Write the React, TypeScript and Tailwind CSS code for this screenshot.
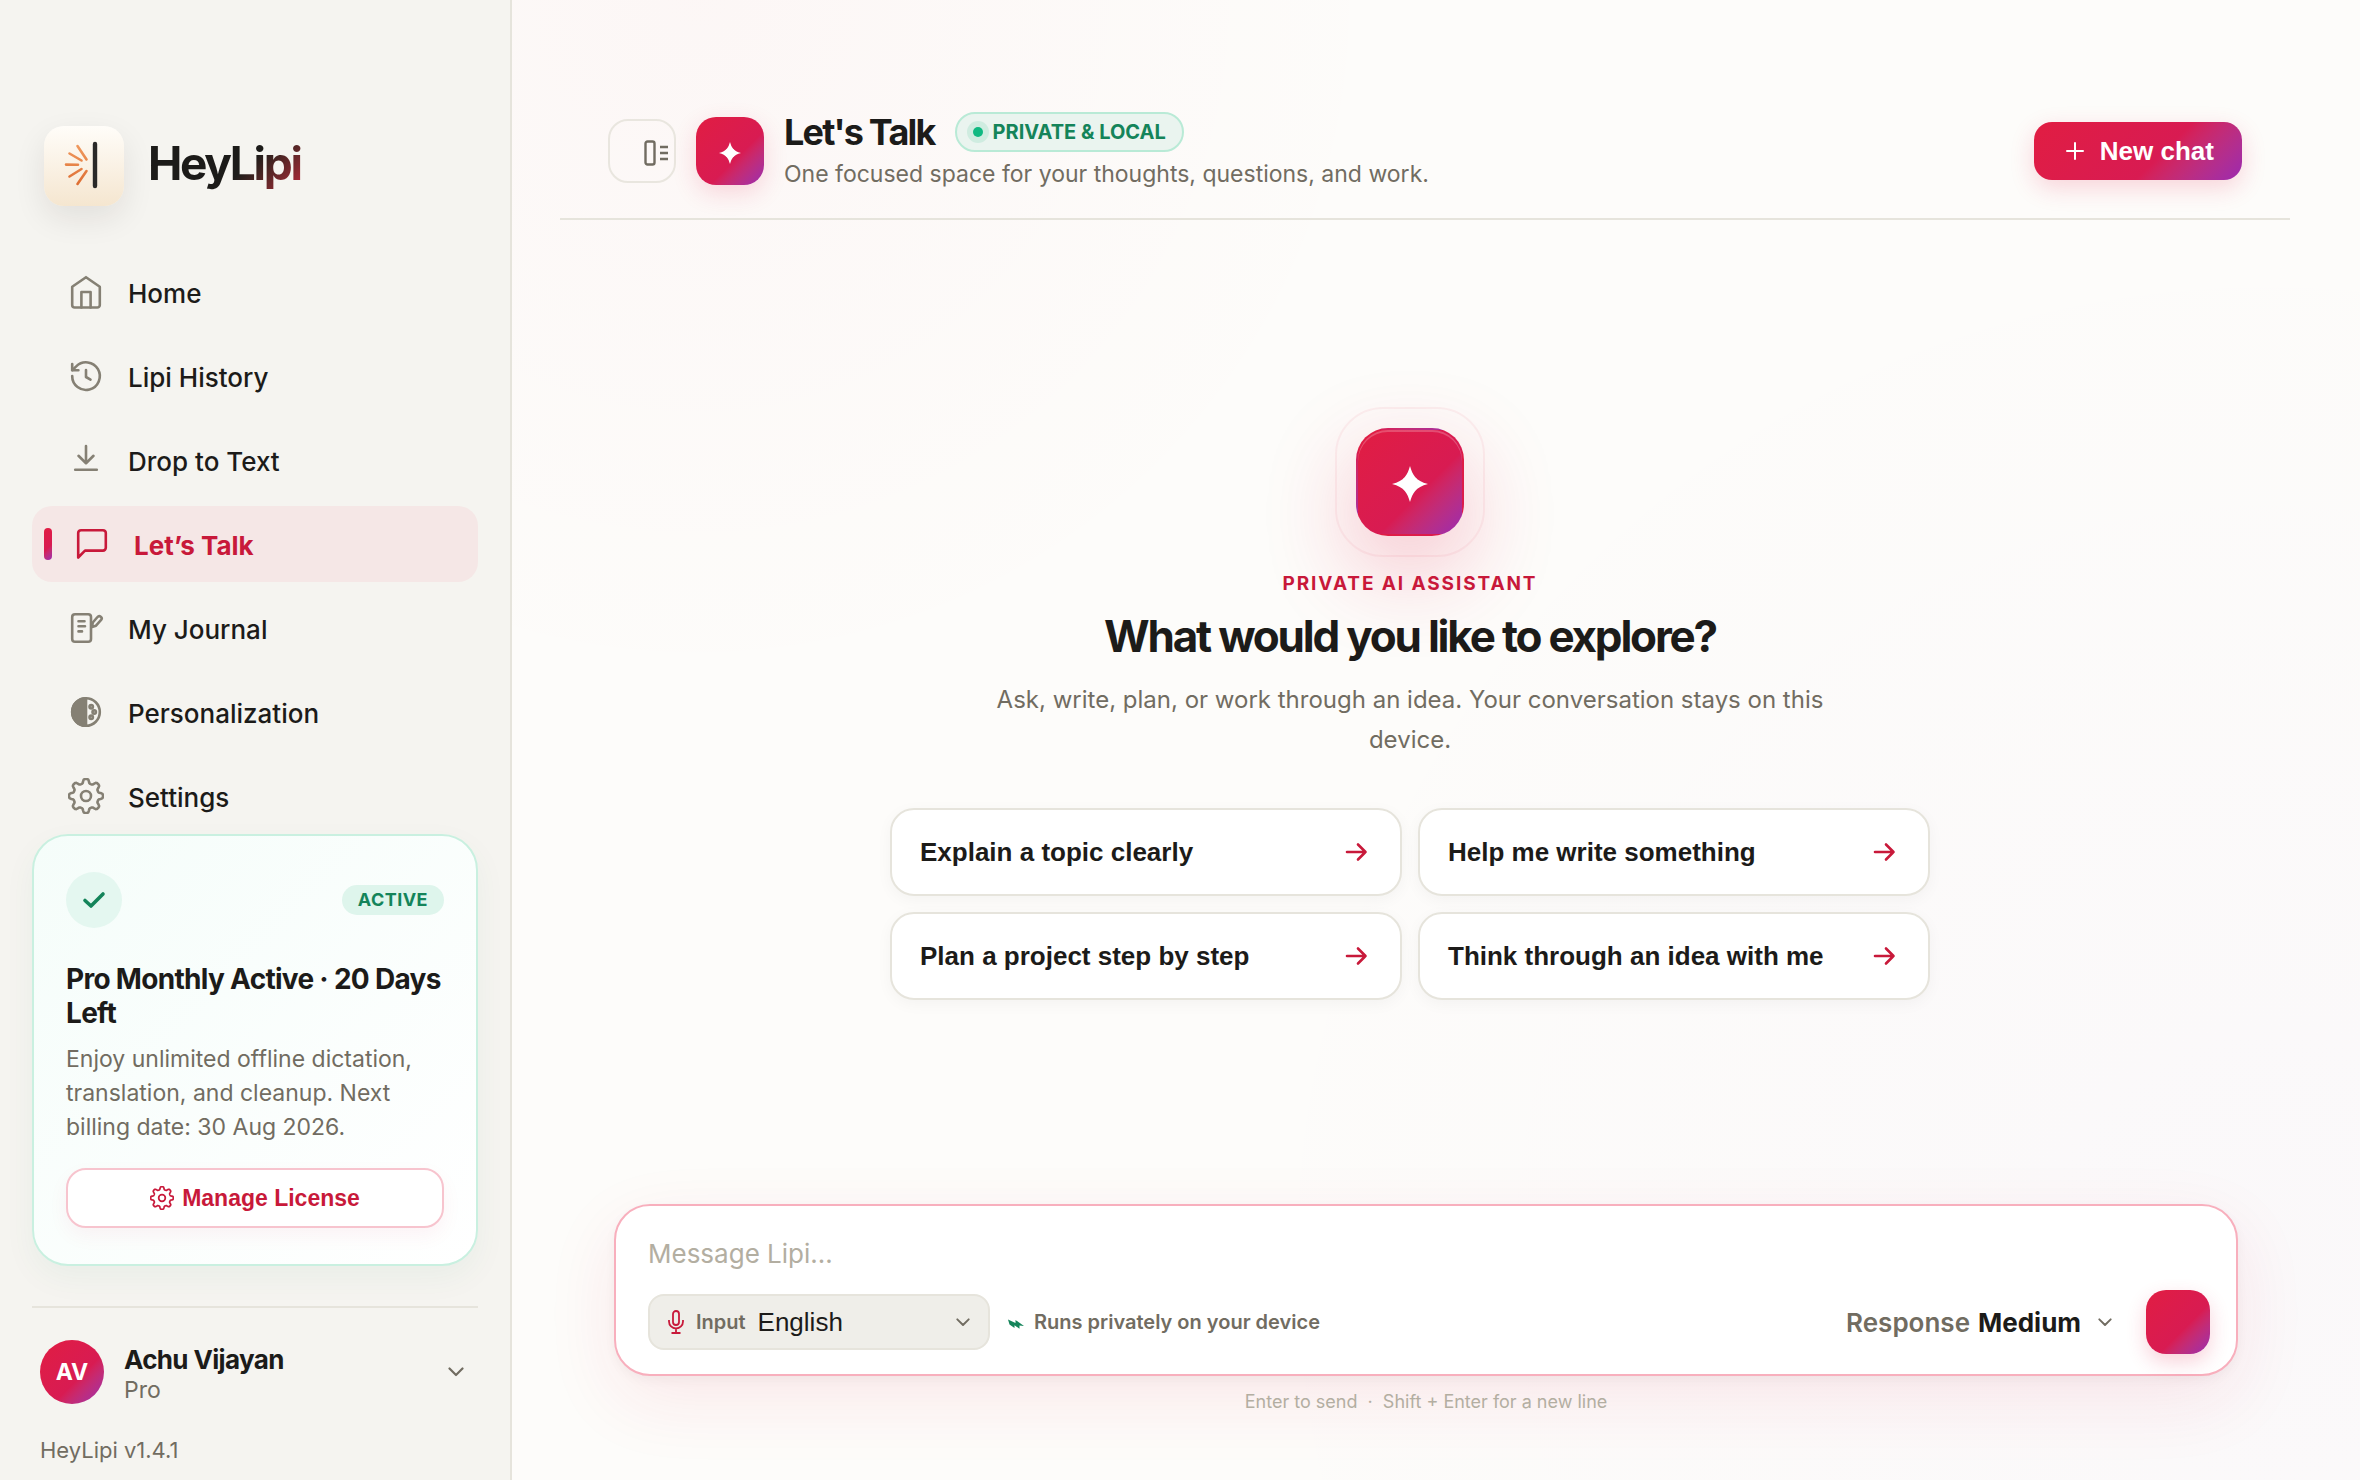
import type { ReactNode } from 'react';

// Soft eight-lobed gear outline around (18, 18)
const gearPath =
  Array.from({ length: 128 }, (_, i) => {
    const angle = (i / 128) * Math.PI * 2;
    const r = 14.9 + (2.1 * Math.tanh(2 * Math.cos(8 * angle))) / Math.tanh(2);
    const x = 18 + r * Math.sin(angle);
    const y = 18 - r * Math.cos(angle);
    return `${i === 0 ? 'M' : 'L'}${x.toFixed(2)} ${y.toFixed(2)}`;
  }).join('') + 'Z';

function Icon({ children, className = 'size-9' }: { children: ReactNode; className?: string }) {
  return (
    <svg
      viewBox="0 0 36 36"
      className={`shrink-0 ${className}`}
      fill="none"
      stroke="currentColor"
      strokeWidth={2.6}
      strokeLinecap="round"
      strokeLinejoin="round"
      aria-hidden="true"
    >
      {children}
    </svg>
  );
}

function GearIcon({ className }: { className?: string }) {
  return (
    <Icon className={className}>
      <path d={gearPath} />
      <circle cx="18" cy="18" r="5" />
    </Icon>
  );
}

function Sparkle({ className }: { className: string }) {
  return (
    <svg viewBox="0 0 24 24" className={className} fill="currentColor" aria-hidden="true">
      <path d="M12 0C13.6 5.6 15.6 10 24 12C15.6 14 13.6 18.4 12 24C10.4 18.4 8.4 14 0 12C8.4 10 10.4 5.6 12 0Z" />
      <circle cx="12" cy="12" r="5.4" />
    </svg>
  );
}

function Chevron({ className }: { className: string }) {
  return (
    <svg
      viewBox="0 0 16 10"
      className={`pointer-events-none shrink-0 ${className}`}
      fill="none"
      stroke="currentColor"
      strokeWidth={2.2}
      strokeLinecap="round"
      strokeLinejoin="round"
      aria-hidden="true"
    >
      <path d="M1.5 1.5L8 8L14.5 1.5" />
    </svg>
  );
}

const navItems = [
  {
    label: 'Home',
    icon: (
      <Icon>
        <path d="M4.2 12.8L18 3.2L31.8 12.8V31a2.5 2.5 0 0 1-2.5 2.5H6.7A2.5 2.5 0 0 1 4.2 31Z" />
        <path d="M13.4 33.4V18h9.2v15.4" />
      </Icon>
    ),
  },
  {
    label: 'Lipi History',
    icon: (
      <Icon>
        <path d="M4.2 18A13.8 13.8 0 1 0 8.2 8.4L4.2 12.2" />
        <path d="M4.2 6v6.2h6.2" />
        <path d="M18 12v7l4.5 2.6" />
      </Icon>
    ),
  },
  {
    label: 'Drop to Text',
    icon: (
      <Icon>
        <path d="M18 4v17M10.5 13.8L18 21.2L25.5 13.8M7.2 27.8h21.6" />
      </Icon>
    ),
  },
  {
    label: 'Let’s Talk',
    active: true,
    icon: (
      <Icon>
        <path d="M4.2 31.5V7a2.8 2.8 0 0 1 2.8-2.8h22A2.8 2.8 0 0 1 31.8 7v14.8a2.8 2.8 0 0 1-2.8 2.8H11Z" />
      </Icon>
    ),
  },
  {
    label: 'My Journal',
    icon: (
      <Icon>
        <rect x="4.2" y="4.2" width="18.8" height="27.6" rx="2.8" />
        <path d="M10.5 11.2h6M10.5 16.2h6.5M10.5 21.4h3.5" />
        <path d="M24 17l.8-4.5L29.5 7a2.3 2.3 0 0 1 3.6 2.9L28 15.7Z" />
      </Icon>
    ),
  },
  {
    label: 'Personalization',
    icon: (
      <Icon>
        <circle cx="18" cy="18" r="13.8" />
        <path d="M18 4.2a13.8 13.8 0 0 0 0 27.6Z" fill="currentColor" />
        <circle cx="23.2" cy="12.8" r="1.7" />
        <circle cx="26.2" cy="18" r="1.7" />
        <circle cx="23.2" cy="23.2" r="1.7" />
      </Icon>
    ),
  },
  { label: 'Settings', icon: <GearIcon /> },
];

const suggestions = [
  'Explain a topic clearly',
  'Help me write something',
  'Plan a project step by step',
  'Think through an idea with me',
];

function Sidebar() {
  return (
    <aside className="flex w-[512px] shrink-0 flex-col border-r-2 border-[#e6e4dc] bg-[#f5f4f0] px-8 pt-[126px] pb-4">
      <div className="flex items-center gap-6 pl-3">
        <div className="flex size-20 items-center justify-center rounded-[20px] bg-linear-to-b from-[#fffdf9] to-[#f5e6d0] shadow-[0_12px_32px_rgba(28,25,23,0.09)]">
          <svg viewBox="0 0 80 80" className="size-20" fill="none" strokeLinecap="round" aria-hidden="true">
            <defs>
              <linearGradient id="rays" x1="0" y1="18" x2="0" y2="60" gradientUnits="userSpaceOnUse">
                <stop stopColor="#f09a5f" />
                <stop offset="1" stopColor="#dd6d31" />
              </linearGradient>
            </defs>
            <g stroke="url(#rays)" strokeWidth="2.6">
              <path d="M33.500 20L42.500 33.500M25.500 27.500L37.500 34.500M22 38.600L34 38.700M25.500 50.500L37.500 43M33.500 58L42.500 45" />
            </g>
            <path d="M51 18V60" stroke="#2a2928" strokeWidth="4.400" />
          </svg>
        </div>
        <h1 className="bg-linear-135 from-[#1c1b19] from-60% to-[#c81e3c] bg-clip-text pb-1.5 text-[46px] leading-[56px] font-bold tracking-tighter text-transparent">
          HeyLipi
        </h1>
      </div>

      <nav className="mt-12 flex flex-col gap-2">
        {navItems.map((item) => (
          <a
            key={item.label}
            href="#"
            className={
              item.active
                ? 'flex h-[76px] items-center rounded-[20px] bg-[#f5e7e6] pl-3 text-[26px] font-bold text-[#c8193a]'
                : 'flex h-[76px] items-center rounded-[20px] pl-9 text-[26px] font-medium text-[#1c1b19]'
            }
          >
            {item.active && (
              <span className="mr-[22px] h-8 w-2 rounded-full bg-linear-135 from-[#e11d42] via-[#d81b52] via-60% to-[#9c27b0]" />
            )}
            <span className={item.active ? '' : 'text-[#858074]'}>{item.icon}</span>
            <span className="pt-0.5 pl-6">{item.label}</span>
          </a>
        ))}
      </nav>

      <section className="rounded-[36px] border-2 border-[#c9f0e0] bg-linear-135 from-[#f5fdfa] to-white px-8 py-9 shadow-[0_12px_32px_rgba(16,120,80,0.05)]">
        <div className="flex items-center justify-between">
          <span className="flex size-14 items-center justify-center rounded-full bg-[#e4f7f0] text-[#14845a]">
            <svg viewBox="0 0 24 18" className="w-6" fill="none" stroke="currentColor" strokeWidth={3.6} strokeLinecap="round" strokeLinejoin="round" aria-hidden="true">
              <path d="M3 9.500L9 15L21 3" />
            </svg>
          </span>
          <span className="rounded-full bg-[#def5ec] px-4 text-[18px] leading-[30px] font-bold tracking-wide text-[#14845a]">ACTIVE</span>
        </div>
        <h2 className="mt-[34px] text-[28px] leading-[34px] font-bold tracking-tight text-[#1c1b19]">
          Pro Monthly Active · 20 Days Left
        </h2>
        <p className="mt-3 text-[23px] leading-[34px] text-[#716c61]">
          Enjoy unlimited offline dictation, translation, and cleanup. Next billing date: 30 Aug 2026.
        </p>
        <button className="mt-6 flex h-[60px] w-full items-center justify-center gap-2 rounded-[20px] border-2 border-[#f7c4ce] bg-white font-['Liberation_Sans',sans-serif] text-[23px] font-bold text-[#c8193a] shadow-[0_8px_20px_rgba(225,29,72,0.05)]">
          <GearIcon className="size-6" />
          Manage License
        </button>
      </section>

      <div className="mt-10 border-t-2 border-[#e6e4dc] px-2 pt-8">
        <button className="flex w-full items-center text-left">
          <span className="flex size-16 items-center justify-center rounded-full bg-linear-135 from-[#e11d42] via-[#d81b52] via-60% to-[#9c27b0] text-[23px] font-bold text-white">
            AV
          </span>
          <span className="flex flex-1 flex-col pt-1 pl-5">
            <span className="text-[26px] leading-8 font-bold tracking-tight text-[#1c1b19]">Achu Vijayan</span>
            <span className="text-[23px] leading-7 text-[#716c61]">Pro</span>
          </span>
          <Chevron className="mr-1.5 w-4 text-[#716c61]" />
        </button>
        <p className="mt-8 text-[22px] leading-7 text-[#716c61]">HeyLipi v1.4.1</p>
      </div>
    </aside>
  );
}

function Header() {
  return (
    <header className="mr-[70px] ml-12 flex items-center border-b-2 border-[#e6e4dc] px-12 pt-[112px] pb-7">
      <button aria-label="Toggle sidebar" className="flex h-16 w-[68px] items-center justify-end rounded-[20px] border-2 border-[#e9e6df] pt-1 pr-1.5 text-[#716c61]">
        <svg viewBox="0 0 24 28" className="h-7 w-6" fill="none" stroke="currentColor" strokeWidth={2.4} aria-hidden="true">
          <rect x="1.500" y="2.500" width="9" height="23" rx="2" />
          <path d="M16 8h8M16 14h8M16 20h8" />
        </svg>
      </button>
      <span className="ml-5 flex size-[68px] items-center justify-center rounded-[20px] bg-linear-135 from-[#e11d42] via-[#d81b52] via-60% to-[#9c27b0] pt-1 text-white shadow-[0_8px_24px_rgba(225,29,72,0.16)]">
        <Sparkle className="size-[22px]" />
      </span>
      <div className="flex-1 pl-5">
        <div className="flex h-10 items-center gap-5">
          <h2 className="text-[36px] font-bold tracking-tighter text-[#1c1b19]">Let's Talk</h2>
          <span className="flex h-10 items-center gap-1 rounded-full border-2 border-[#b9ead6] bg-[#eaf4ef] pr-4 pl-2.5 text-[20px] font-bold text-[#14845a]">
            <span className="flex size-[22px] items-center justify-center rounded-full bg-[#cfece0]">
              <span className="size-2.5 rounded-full bg-[#10b981]" />
            </span>
            PRIVATE &amp; LOCAL
          </span>
        </div>
        <p className="pt-1.5 text-[23px] leading-8 text-[#716c61]">
          One focused space for your thoughts, questions, and work.
        </p>
      </div>
      <button className="flex h-[58px] items-center gap-4 rounded-[18px] bg-linear-135 from-[#e11d42] via-[#d81b52] via-60% to-[#9c27b0] pr-7 pl-8 font-['Liberation_Sans',sans-serif] text-[26px] font-bold text-white shadow-[0_8px_24px_rgba(225,29,72,0.18)]">
        <svg viewBox="0 0 18 18" className="size-[18px]" stroke="currentColor" strokeWidth={2} strokeLinecap="round" aria-hidden="true">
          <path d="M9 1v16M1 9h16" />
        </svg>
        New chat
      </button>
    </header>
  );
}

function Welcome() {
  return (
    <section className="mr-[100px] ml-12 flex flex-1 flex-col items-center justify-center pt-1 text-center">
      <div className="relative flex size-[108px] items-center justify-center rounded-[32px] border-2 border-transparent bg-linear-135 from-[#e11d42] via-[#d81b52] via-60% to-[#9c27b0] text-white shadow-[0_32px_90px_rgba(225,29,72,0.28),inset_0_2px_0_rgba(255,255,255,0.22)]">
        <span className="absolute -inset-[23px] rounded-[48px] border-2 border-[#e11d48]/6" />
        <Sparkle className="mt-1 size-9" />
      </div>
      <p className="mt-[34px] text-[19px] leading-7 font-bold tracking-widest text-[#c8193a]">PRIVATE AI ASSISTANT</p>
      <h2 className="mt-2.5 text-[44px] leading-[56px] font-bold tracking-tighter text-[#1c1b19]">
        What would you like to explore?
      </h2>
      <p className="mt-4 max-w-[860px] text-[24px] leading-10 text-[#716c61]">
        Ask, write, plan, or work through an idea. Your conversation stays on this device.
      </p>
      <div className="mt-12 grid w-full max-w-[1040px] grid-cols-2 gap-4">
        {suggestions.map((text) => (
          <button
            key={text}
            className="flex h-[88px] items-center justify-between rounded-[24px] border-2 border-[#e6e4dc] bg-white px-7 font-['Liberation_Sans',sans-serif] text-[26px] font-bold text-[#1c1b19] shadow-[0_4px_16px_rgba(28,25,23,0.04)]"
          >
            {text}
            <svg viewBox="0 0 28 28" className="size-7 text-[#c8193a]" fill="none" stroke="currentColor" strokeWidth={2.6} strokeLinejoin="round" strokeLinecap="round" aria-hidden="true">
              <path d="M3 14h18.500M14 6.500L21.500 14L14 21.500" />
            </svg>
          </button>
        ))}
      </div>
    </section>
  );
}

function Composer() {
  return (
    <div className="mr-[122px] ml-[102px] pb-16">
      <form className="rounded-[36px] border-2 border-[#f8afbd] bg-white pt-[30px] pr-[26px] pb-5 pl-8 shadow-[0_24px_72px_rgba(225,29,72,0.09),0_4px_12px_rgba(28,25,23,0.04)]">
        <textarea
          rows={1}
          aria-label="Message"
          placeholder="Message Lipi…"
          className="block h-9 w-full resize-none overflow-hidden bg-transparent text-[26px] leading-9 text-[#1c1b19] outline-none placeholder:text-[#b3aea1]"
        />
        <div className="mt-[18px] flex items-center">
          <label className="flex h-14 w-[342px] items-center rounded-[16px] border-2 border-[#e6e4dc] bg-[#efeee9] pr-[18px] pl-[18px]">
            <svg viewBox="0 0 16 24" className="h-6 w-4 text-[#c8193a]" fill="none" stroke="currentColor" strokeWidth={1.8} aria-hidden="true">
              <rect x="5" y="1" width="6" height="14" rx="3" />
              <path d="M1 10v1.500a7 7 0 0 0 14 0V10M8 18.500V23M3.500 23h9" />
            </svg>
            <span className="pl-3 text-[20px] font-semibold text-[#716c61]">Input</span>
            <select className="ml-3 flex-1 appearance-none bg-transparent font-['Liberation_Sans',sans-serif] text-[26px] text-[#1c1b19] outline-none">
              <option>English</option>
            </select>
            <Chevron className="w-3.5 text-[#716c61]" />
          </label>
          <svg viewBox="0 0 16 10" className="mt-1 ml-[18px] w-4 text-[#14845a]" fill="currentColor" aria-hidden="true">
            <path d="M0 .5L7.500 4V1L16 7L11.500 6.500V9.800L6.500 6.200V9L1.500 5.500L0 .5Z" />
          </svg>
          <span className="pl-2.5 text-[20px] font-semibold text-[#716c61]">Runs privately on your device</span>
          <label className="ml-auto flex items-center text-[26px] font-semibold text-[#716c61]">
            Response
            <select className="ml-2 appearance-none bg-transparent font-bold text-[#1c1b19] outline-none">
              <option>Medium</option>
            </select>
            <Chevron className="ml-4 w-3.5" />
          </label>
          <button
            type="button"
            aria-label="Send"
            className="ml-[34px] size-16 rounded-[20px] bg-linear-135 from-[#e11d42] via-[#d81b52] via-60% to-[#9c27b0] shadow-[0_8px_20px_rgba(225,29,72,0.2)]"
          />
        </div>
      </form>
      <p className="mt-3 text-center text-[18px] leading-7 whitespace-pre text-[#b3aea1]">
        Enter to send  ·  Shift + Enter for a new line
      </p>
    </div>
  );
}

export default function App() {
  return (
    <div className="flex min-h-screen font-[Inter,sans-serif]">
      <Sidebar />
      <main className="flex flex-1 flex-col bg-[#fdfcfa] bg-[radial-gradient(circle_at_10%_0%,rgba(225,29,72,0.024),transparent_32%),radial-gradient(circle_at_95%_85%,rgba(124,58,237,0.018),transparent_50%)]">
        <Header />
        <Welcome />
        <Composer />
      </main>
    </div>
  );
}
